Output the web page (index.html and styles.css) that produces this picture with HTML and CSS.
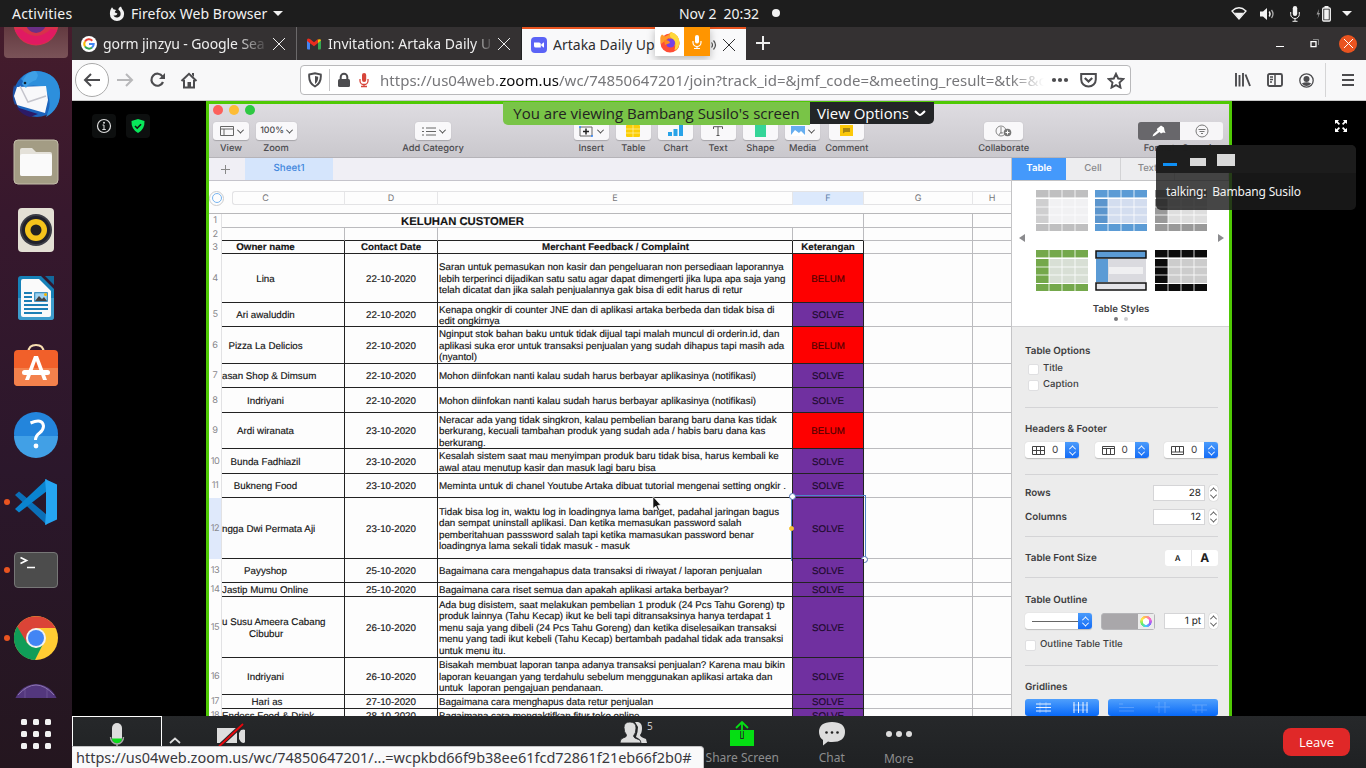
FILE: index.html
```html
<!DOCTYPE html>
<html lang="en">
<head>
<meta charset="utf-8">
<title>Artaka Daily Update</title>
<link rel="stylesheet" href="styles.css">
</head>
<body>
<header class="topbar">
  <span class="activities">Activities</span>
  <svg class="fx-mono" width="16" height="16" viewBox="0 0 16 16"><path d="M3 1.200C1.500 3 .9 5 .9 8a7.100 7.100 0 0 0 14.200 0c0-2-.6-3.500-2-5L12 .6c-1 .4-2.600 1.500-2.600 3.200 1.200.7 2.200 1.900 2.200 3.900A3.700 3.700 0 0 1 4.400 9C6 10 8 9.500 8.400 7.600L6 6.500C5.400 6 6.500 4.500 7.400 4.300 6.400 3.400 5.500 3.300 4.700 3.500z" fill="#f2f2f2"/></svg>
  <span class="appname">Firefox Web Browser</span>
  <span class="tri"></span>
  <span class="clock">Nov 2&nbsp; 20:32</span>
  <span class="notif"></span>
  <div class="tray">
    <svg width="16" height="14" viewBox="0 0 16 14"><path d="M1 4Q8-2.500 15 4L8 12z" fill="none" stroke="#f2f2f2" stroke-width="1.300"/><path d="M3.500 5.800h9L8 12z" fill="#f2f2f2"/></svg>
    <svg width="16" height="14" viewBox="0 0 16 14"><path d="M0 4.500h3L7 1v12L3 9.500H0z" fill="#f2f2f2"/><path d="M9.300 4.500q1.500 2.500 0 5" fill="none" stroke="#f2f2f2" stroke-width="1.500"/><path d="M11.500 3q3 4 0 8" fill="none" stroke="#aaa" stroke-width="1.300"/></svg>
    <svg width="10" height="16" viewBox="0 0 10 16"><rect x="2.800" y="0" width="4.400" height="10" rx="2.200" fill="#f2f2f2"/><path d="M.7 6v2.500a4.300 4 0 0 0 8.600 0V6M5 12.500V15M2.500 15.300h5" fill="none" stroke="#f2f2f2"/></svg>
    <svg width="15" height="16" viewBox="0 0 15 16"><path d="M3 3L.5 8.500h2L1.500 13 4 7H2.500z" fill="#999"/><rect x="6.700" y="2" width="7.600" height="13" rx="1" fill="none" stroke="#f2f2f2" stroke-width="1.300"/><rect x="8.200" y="3.500" width="4.600" height="10" fill="#f2f2f2"/><rect x="8.500" y="0" width="4" height="2" fill="#f2f2f2"/></svg>
    <span class="tri"></span>
  </div>
</header>
<div class="desk">
  <nav class="dock">
    <div class="slot first"><svg width="48" height="20" viewBox="0 28 48 20"><circle cx="24" cy="24" r="22.500" fill="#d8314a"/><path d="M3 31a22.500 22.500 0 0 0 42 0l-6-1q-15 14-30 0z" fill="#e01a62"/><circle cx="24" cy="24" r="10" fill="#6b2f86"/></svg></div>
    <div class="slot"><svg width="50" height="50" viewBox="0 0 50 50"><circle cx="26" cy="25" r="23" fill="#1b64bd"/><path d="M10 10Q18-1 32 3q16 4 17 21 0 16-14 24 6-12 2-22-5-12-20-9z" fill="#2d8fdc"/><path d="M3 16Q0 28 4 36l6-6z" fill="#1d50a5"/><path d="M5 38q6 8 14 10l8-3z" fill="#2c1b66"/><path d="M6 18L35 17 37 31 34 44 6 36 3 27z" fill="#f8f8fa"/><path d="M9 17l8 16 18-6" fill="none" stroke="#c4c4cc" stroke-width="1.500"/><path d="M11 15q3-12 13-13 5 3 1 9-7 2-10 8z" fill="#3fa0e6"/><circle cx="14" cy="14" r="1.300" fill="#123"/></svg></div>
    <div class="slot"><svg width="48" height="48" viewBox="0 0 48 48"><rect x="2" y="2" width="44" height="44" rx="4" fill="#a39c84" stroke="#c3bda9"/><path d="M8 12q0-2 2-2h10l4 4h14q2 0 2 2v20q0 2-2 2H10q-2 0-2-2z" fill="#e4e1d9"/><rect x="8" y="16" width="32" height="22" rx="2" fill="#fafafa"/></svg></div>
    <div class="slot"><svg width="48" height="48" viewBox="0 0 48 48"><rect x="6" y="2" width="36" height="44" rx="4" fill="#e3dfd4"/><circle cx="24" cy="24" r="16" fill="#3c3d45"/><circle cx="24" cy="24" r="14" fill="#20212a"/><circle cx="24" cy="24" r="11" fill="#f4c31b"/><circle cx="24" cy="24" r="5.500" fill="#222"/></svg></div>
    <div class="slot"><svg width="48" height="48" viewBox="0 0 48 48"><path d="M6 5q0-3 3-3h20l13 13v28q0 3-3 3H9q-3 0-3-3z" fill="#1681b8"/><path d="M33 2h9v9z" fill="#13689b"/><path d="M6 24h36v19q0 3-3 3H9q-3 0-3-3z" fill="#3d9ccc"/><path d="M9 7q0-2 2-2h16l12 12v24q0 2-2 2H11q-2 0-2-2z" fill="#fafafa"/><path d="M12 19h8M12 23h8M12 27h8M12 31h24M12 35h24M12 39h18" stroke="#1c7fb6" stroke-width="2"/><rect x="22.700" y="18.700" width="12.600" height="8.600" fill="#9ed2f1" stroke="#1c7fb6"/><path d="M23 27l4-5 3 3 2-2 3 4z" fill="#444"/><circle cx="33.500" cy="20.500" r="1.500" fill="#f4b400"/></svg></div>
    <div class="slot"><svg width="48" height="48" viewBox="0 0 48 48"><path d="M16.500 10q0-7 7.500-7t7.500 7" fill="none" stroke="#f7deb0" stroke-width="2"/><rect x="2" y="8" width="44" height="36" rx="4" fill="#f1602a"/><path d="M2 26h44v14q0 4-4 4H6q-4 0-4-4z" fill="#f3814c"/><path d="M13 38l9-24h4l9 24h-4L24 19 17 38z" fill="#fff"/><rect x="10" y="28" width="28" height="5" rx="2.500" fill="#fff"/></svg></div>
    <div class="slot"><svg width="48" height="48" viewBox="0 0 48 48"><circle cx="24" cy="24" r="22" fill="#2385dc"/><path d="M2 26a22 22 0 0 0 44 0z" fill="#41a0e6"/><path d="M18.500 13q12-5 13 3 0 4-4 7-4 3-4 7" fill="none" stroke="#fff" stroke-width="3"/><circle cx="24" cy="36" r="2.400" fill="#fff"/></svg></div>
    <div class="slot run"><svg width="48" height="48" viewBox="0 0 48 48"><path d="M3 17l4-3.500L35 37v10z" fill="#0b6fb8"/><path d="M3 31l4 3.500L35 13V1z" fill="#0a84d0"/><path d="M33 1l12 5.500v35L33 47l1-12V13z" fill="#25a5f2"/></svg></div>
    <div class="slot run"><svg width="48" height="48" viewBox="0 0 48 48"><rect x="2.500" y="6.500" width="43" height="35" rx="3.500" fill="#4c4c4c" stroke="#777"/><path d="M8.500 11.500l6 3-6 3M15 21.500h8" fill="none" stroke="#fff" stroke-width="1.700"/></svg></div>
    <div class="slot run"><svg width="48" height="48" viewBox="0 0 48 48"><circle cx="24" cy="24" r="22" fill="#fc3"/><path d="M5 13a22 22 0 0 1 38.500 1H24L14 29z" fill="#db4437"/><path d="M5.200 12.500A22 22 0 0 0 23 46l8-16-7 4-9-5z" fill="#0f9d58"/><circle cx="24" cy="24" r="10" fill="#f1f1f1"/><circle cx="24" cy="24" r="8" fill="#4285f4"/></svg></div>
    <div class="slot last"><svg width="48" height="48" viewBox="0 0 48 48"><circle cx="24" cy="24" r="22" fill="#53377d"/><path d="M13 6v20M35 6v20" stroke="#7b62a0" opacity=".6"/><path d="M6 13q18-20 36 0" fill="none" stroke="#8c76ae"/></svg></div>
    <div class="apps"><i></i><i></i><i></i><i></i><i></i><i></i><i></i><i></i><i></i></div>
  </nav>
  <main class="browser">
    <div class="tabs">
      <div class="tab"><svg width="16" height="16" viewBox="0 0 16 16"><circle cx="8" cy="8" r="8" fill="#fff"/><g fill="none" stroke-width="2"><path d="M11.300 4.700A4.700 4.700 0 0 0 4 5.500" stroke="#ea4335"/><path d="M4 5.500a4.700 4.700 0 0 0 0 5" stroke="#fbbc05"/><path d="M4 10.500a4.700 4.700 0 0 0 7 1" stroke="#34a853"/><path d="M11 11.500q1.700-1.500 1.700-3.500H8" stroke="#4285f4"/></g></svg><span class="ttl t1">gorm jinzyu - Google Sea</span><b class="x"></b></div>
      <div class="tab"><svg width="16" height="16" viewBox="0 0 16 16"><path d="M1 4l3 2.500v7H2q-1 0-1-1z" fill="#4285f4"/><path d="M12 6.500L15 4v8.500q0 1-1 1h-2z" fill="#34a853"/><path d="M12 3.500q3-1 3 1L12 7z" fill="#fbbc04"/><path d="M1 4q0-2.500 3-1l4 3.300L12 3v4l-4 3.300L1 5z" fill="#ea2d1f"/></svg><span class="ttl t2">Invitation: Artaka Daily U</span><b class="x"></b></div>
      <div class="tab active"><svg width="16" height="16" viewBox="0 0 16 16"><rect width="16" height="16" rx="4" fill="#5b63f6"/><path d="M3 5.500h5q1.800 0 1.800 1.500v3.500h-5Q3 10.500 3 9z" fill="#fff"/><path d="M10.300 7.200L13 5.300v5.400l-2.700-1.900z" fill="#fff"/></svg><span class="ttl t3">Artaka Daily Up</span><svg class="snd" width="9" height="12" viewBox="0 0 9 12"><path d="M1 1v10M3.500 3.500q2 2.500 0 5M5.500 1.500q4 4.500 0 9" fill="none" stroke="#555" stroke-width="1.200"/></svg><b class="x"></b>
        <div class="share-ind"><span><svg width="22" height="22" viewBox="0 0 22 22"><circle cx="11" cy="12" r="9.500" fill="#ff4d35"/><path d="M2 13Q0 6 3 3.500l3 2Q9 5 12 1q8 3 8.500 11 0 5-4 8 0-9-7-13z" fill="#ff9a2a"/><path d="M12 1q9 3 8.500 11-1 6-5 7 3-9-3-12-3-2-.5-6z" fill="#ffd83c"/><circle cx="11.500" cy="12" r="4.500" fill="#7542e5"/><path d="M5 9q6 0 6 3l-5 2z" fill="#ff8a20"/></svg></span><em><svg width="12" height="16" viewBox="0 0 12 16"><rect x="4" y="1" width="4" height="8.500" rx="2" fill="#fff"/><path d="M2 7v1.500a4 4 0 0 0 8 0V7M6 12.500V14M3 14.500h6" fill="none" stroke="#fff" stroke-width="1.200"/></svg></em></div>
      </div>
      <b class="plus"></b>
      <div class="winbtns"><i class="min"></i><svg width="9" height="9" viewBox="0 0 9 9"><path d="M1 2.700h5v5H1z" fill="none" stroke="#fff" stroke-width="1.300"/><path d="M3 .5h5.500V6" fill="none" stroke="#888"/></svg><span class="close"><b class="x"></b></span></div>
    </div>
    <div class="nav">
      <span class="back"><svg width="18" height="16" viewBox="0 0 18 16"><path d="M17 8H2M8 2L2 8l6 6" fill="none" stroke="#4c4c4f" stroke-width="2"/></svg></span>
      <svg class="i-fwd" width="18" height="16" viewBox="0 0 18 16"><path d="M1 8h15M10 2l6 6-6 6" fill="none" stroke="#b8b8ba" stroke-width="2"/></svg>
      <svg class="i-rel" width="17" height="16" viewBox="0 0 17 16"><path d="M13.500 4.500A6 6 0 1 0 14 10" fill="none" stroke="#4c4c4f" stroke-width="2.200"/><path d="M16 1v6h-6z" fill="#4c4c4f"/></svg>
      <svg class="i-home" width="18" height="17" viewBox="0 0 18 17"><path d="M1.500 9L9 1.800 16.500 9M4 8v7.500h10V8" fill="none" stroke="#4c4c4f" stroke-width="2"/><path d="M12 1h2v4l-2-2zM7.500 10h3.500v5H7.500z" fill="#4c4c4f"/></svg>
      <div class="url">
        <svg width="14" height="16" viewBox="0 0 14 16"><path d="M1.200 2.500L7 1.200l5.800 1.300Q13.500 11 7 14.500.5 11 1.200 2.500z" fill="none" stroke="#4c4c4f" stroke-width="1.900"/><path d="M7 4l3.200.8Q10.300 10 7 12z" fill="#4c4c4f"/></svg>
        <i class="vsep"></i>
        <svg width="14" height="16" viewBox="0 0 14 16"><rect x="1" y="7" width="12" height="8" rx="1.500" fill="#4c4c4f"/><path d="M3.700 7V5a3.300 3.300 0 0 1 6.600 0v2" fill="none" stroke="#4c4c4f" stroke-width="2"/></svg>
        <svg class="umic" width="10" height="16" viewBox="0 0 10 16"><rect x="3" y="1" width="4.200" height="9" rx="2.100" fill="#d7453a"/><path d="M1 7v2a4 3.500 0 0 0 8 0V7M5 12.500V14M2 14.500h6" fill="none" stroke="#d7453a" stroke-width="1.300"/></svg>
        <span class="utext">https://us04web.<b>zoom.us</b>/wc/74850647201/join?track_id=&amp;jmf_code=&amp;meeting_result=&amp;tk=&amp;c</span>
        <svg class="u1" width="18" height="6" viewBox="0 0 18 6"><circle cx="3" cy="3" r="2.100" fill="#4c4c4f"/><circle cx="9" cy="3" r="2.100" fill="#4c4c4f"/><circle cx="15" cy="3" r="2.100" fill="#4c4c4f"/></svg>
        <svg class="u2" width="17" height="16" viewBox="0 0 17 16"><path d="M1.200 2h14.600v5.500a7.300 7 0 0 1-14.600 0z" fill="none" stroke="#4c4c4f" stroke-width="2"/><path d="M4.800 6l3.700 3.500L12.200 6" fill="none" stroke="#4c4c4f" stroke-width="2.200"/></svg>
        <svg class="u3" width="18" height="17" viewBox="0 0 18 17"><path d="M9 1.800l2.200 4.700 5 .6-3.700 3.500 1 5L9 13.200l-4.500 2.400 1-5L1.800 7.100l5-.6z" fill="none" stroke="#4c4c4f" stroke-width="1.900"/></svg>
      </div>
      <svg class="i-lib" width="16" height="14" viewBox="0 0 16 14"><path d="M1 0v13.500M4.500 2v11.500M8 0v13.500M10.500 1.500L15 13" fill="none" stroke="#4c4c4f" stroke-width="1.900"/></svg>
      <svg class="i-side" width="16" height="14" viewBox="0 0 16 14"><rect x="1" y="1" width="14" height="12" rx="1.500" fill="none" stroke="#4c4c4f" stroke-width="1.900"/><path d="M8 1v12M3 4h3M3 6.500h3M3 9h2" stroke="#4c4c4f" stroke-width="1.500"/></svg>
      <svg class="i-acc" width="15" height="15" viewBox="0 0 15 15"><circle cx="7.500" cy="7.500" r="6.700" fill="none" stroke="#4c4c4f" stroke-width="1.300"/><circle cx="7.500" cy="6" r="3" fill="#4c4c4f"/><path d="M2.800 10.500q4.700-2.500 9.400 0-4.700 5-9.400 0z" fill="#4c4c4f"/></svg>
      <i class="nsep"></i>
      <span class="burger"></span>
    </div>
    <section class="zoom">
      <div class="ztiles">
        <span><svg width="16" height="16" viewBox="0 0 16 16"><circle cx="8" cy="8" r="6.500" fill="none" stroke="#ddd" stroke-width="1.200"/><path d="M6.500 7H8v4.500M6.300 11.500h3.500" fill="none" stroke="#ddd"/><circle cx="8" cy="4.800" r="1" fill="#ddd"/></svg></span>
        <span><svg width="14" height="14" viewBox="0 0 14 14"><path d="M7 0l6.500 2Q14 10 7 14 0 10 .5 2z" fill="#08e65a"/><path d="M4 7l2.200 2.200L10 5.200" fill="none" stroke="#111" stroke-width="1.600"/></svg></span>
      </div>
      <div class="share">
        <div class="mac">
          <div class="lights"><i class="red-l"></i><i class="yel-l"></i><i class="grn-l"></i></div>
          <div class="mtools">
            <div class="mt c1"><span class="btn w36"><svg width="14" height="10" viewBox="0 0 14 10"><path d="M.5.500h13v9H.5zM.5 3h13M4 3v6.500" fill="none" stroke="#666"/></svg><u></u></span>View</div>
            <div class="mt c2"><span class="btn w41">100%<u></u></span>Zoom</div>
            <div class="mt c4"><span class="btn w36"><svg width="14" height="9" viewBox="0 0 14 9"><path d="M0 1h2M4 1h10M0 4.500h2M4 4.500h10M0 8h2M4 8h10" stroke="#666"/></svg><u></u></span>Add Category</div>
            <div class="mt c6"><span class="btn"><svg width="15" height="11" viewBox="0 0 15 11"><path d="M1 1h12v9H1z" fill="none" stroke="#666"/><path d="M4 5.500h6M7 2.500v6" stroke="#222" stroke-width="1.500"/><circle cx="1" cy="1" r="1" fill="#38f"/><circle cx="13" cy="10" r="1" fill="#38f"/></svg><u></u></span>Insert</div>
            <div class="mt"><span class="btn"><svg width="14" height="12" viewBox="0 0 14 12"><rect width="14" height="12" rx="1" fill="#fbce07"/><path d="M0 4h14M0 8h14M7 0v12" stroke="#fff2b0" stroke-width=".7"/></svg></span>Table</div>
            <div class="mt"><span class="btn"><svg width="15" height="12" viewBox="0 0 15 12"><rect y="7" width="4" height="4" fill="#29a3e8"/><rect x="5.500" y="4" width="4" height="7" fill="#29a3e8"/><rect x="11" width="4" height="11" fill="#29a3e8"/></svg></span>Chart</div>
            <div class="mt"><span class="btn"><svg width="10" height="10" viewBox="0 0 10 10"><path d="M.5 3V.7h9V3M5 .7V9.500M3.500 9.500h3" fill="none" stroke="#555"/></svg></span>Text</div>
            <div class="mt"><span class="btn"><svg width="11" height="12" viewBox="0 0 11 12"><rect width="11" height="12" fill="#35d598"/></svg></span>Shape</div>
            <div class="mt"><span class="btn"><svg width="14" height="10" viewBox="0 0 14 10"><rect width="14" height="10" fill="#66aef0"/><path d="M0 9l4-5 4 3 2-2 4 4v1H0z" fill="#fff"/></svg><u></u></span>Media</div>
            <div class="mt"><span class="btn"><svg width="13" height="12" viewBox="0 0 13 12"><path d="M0 0h13v11H0z" fill="#fbc80a"/><path d="M3 3h7v4H5L3 8.500z" fill="#a88612"/></svg></span>Comment</div>
            <div class="mt c14"><span class="btn w39"><svg width="17" height="12" viewBox="0 0 17 12"><circle cx="6" cy="6" r="5" fill="none" stroke="#888"/><path d="M6 2v7M4 10q1-4 4-2" stroke="#888" fill="none"/><circle cx="12.500" cy="7.500" r="3.800" fill="#777"/><path d="M10.500 7.500h4M12.500 5.500v4" stroke="#fff"/></svg></span>Collaborate</div>
            <div class="mt c16"><div class="seg"><span><svg width="14" height="12" viewBox="0 0 14 12"><path d="M.5 11.500L1.500 9l4-3.500L4.800 4 9 .5l3 2 .5 3 1 2.500-2.500-.5-2 1-1.500-1.500L3 10.500z" fill="#fff"/></svg></span><span><svg width="14" height="14" viewBox="0 0 14 14"><circle cx="7" cy="7" r="6" fill="none" stroke="#777"/><path d="M3.500 5.500h7M4.500 7.500h5M6 9.500h2" stroke="#777"/></svg></span></div><div class="fmt"><span>Format</span><span>Organize</span></div></div>
          </div>
        </div>
        <div class="work">
          <div class="left">
            <div class="sheetbar"><b class="plus s"></b><span>Sheet1</span></div>
            <div class="colhead"><i class="orb"></i><div class="cols"><span>C</span><span>D</span><span>E</span><span class="on">F</span><span>G</span><span>H</span></div></div>
            <div class="grid">
              <div class="row h1"><i>1</i><p class="merge">KELUHAN CUSTOMER</p><s></s><s></s></div>
              <div class="row h2"><i>2</i><p></p><p></p><p></p><p></p><s></s><s></s></div>
              <div class="row h3"><i>3</i><p>Owner name</p><p>Contact Date</p><p>Merchant Feedback / Complaint</p><p>Keterangan</p><s></s><s></s></div>
              <div class="row a49"><i>4</i><p>Lina</p><p>22-10-2020</p><p>Saran untuk pemasukan non kasir dan pengeluaran non persediaan laporannya<br>lebih terperinci dijadikan satu satu agar dapat dimengerti jika lupa apa saja yang<br>telah dicatat dan jika salah penjualannya gak bisa di edit harus di retur</p><p class="red">BELUM</p><s></s><s></s></div>
              <div class="row a24"><i>5</i><p>Ari awaluddin</p><p>22-10-2020</p><p>Kenapa ongkir di counter JNE dan di aplikasi artaka berbeda dan tidak bisa di<br>edit ongkirnya</p><p class="pur">SOLVE</p><s></s><s></s></div>
              <div class="row a37"><i>6</i><p>Pizza La Delicios</p><p>22-10-2020</p><p>Nginput stok bahan baku untuk tidak dijual tapi malah muncul di orderin.id, dan<br>aplikasi suka eror untuk transaksi penjualan yang sudah dihapus tapi masih ada<br>(nyantol)</p><p class="red">BELUM</p><s></s><s></s></div>
              <div class="row a24"><i>7</i><p class="cut">asan Shop &amp; Dimsum</p><p>22-10-2020</p><p>Mohon diinfokan nanti kalau sudah harus berbayar aplikasinya (notifikasi)</p><p class="pur">SOLVE</p><s></s><s></s></div>
              <div class="row a25"><i>8</i><p>Indriyani</p><p>22-10-2020</p><p>Mohon diinfokan nanti kalau sudah harus berbayar aplikasinya (notifikasi)</p><p class="pur">SOLVE</p><s></s><s></s></div>
              <div class="row a36"><i>9</i><p>Ardi wiranata</p><p>23-10-2020</p><p>Neracar ada yang tidak singkron, kalau pembelian barang baru dana kas tidak<br>berkurang, kecuali tambahan produk yang sudah ada / habis baru dana kas<br>berkurang.</p><p class="red">BELUM</p><s></s><s></s></div>
              <div class="row a25"><i>10</i><p>Bunda Fadhiazil</p><p>23-10-2020</p><p>Kesalah sistem saat mau menyimpan produk baru tidak bisa, harus kembali ke<br>awal atau menutup kasir dan masuk lagi baru bisa</p><p class="pur">SOLVE</p><s></s><s></s></div>
              <div class="row a24"><i>11</i><p>Bukneng Food</p><p>23-10-2020</p><p>Meminta untuk di chanel Youtube Artaka dibuat tutorial mengenai setting ongkir .</p><p class="pur">SOLVE</p><s></s><s></s></div>
              <div class="row a61 sel"><i>12</i><p class="cut">ngga Dwi Permata Aji</p><p>23-10-2020</p><p>Tidak bisa log in, waktu log in loadingnya lama banget, padahal jaringan bagus<br>dan sempat uninstall aplikasi. Dan ketika memasukan password salah<br>pemberitahuan passsword salah tapi ketika mamasukan password benar<br>loadingnya lama sekali tidak masuk - masuk</p><p class="pur">SOLVE</p><s></s><s></s><em class="selbox"><b></b></em></div>
              <div class="row a24"><i>13</i><p>Payyshop</p><p>25-10-2020</p><p>Bagaimana cara mengahapus data transaksi di riwayat / laporan penjualan</p><p class="pur">SOLVE</p><s></s><s></s></div>
              <div class="row a14"><i>14</i><p class="cut">Jastip Mumu Online</p><p>25-10-2020</p><p>Bagaimana cara riset semua dan apakah aplikasi artaka berbayar?</p><p class="pur">SOLVE</p><s></s><s></s></div>
              <div class="row a61"><i>15</i><p class="cut two"><span>u Susu Ameera Cabang</span><span class="mid">Cibubur</span></p><p>26-10-2020</p><p>Ada bug disistem, saat melakukan pembelian 1 produk (24 Pcs Tahu Goreng) tp<br>produk lainnya (Tahu Kecap) ikut ke beli tapi ditransaksinya hanya terdapat 1<br>menu saja yang dibeli (24 Pcs Tahu Goreng) dan ketika diselesaikan transaksi<br>menu yang tadi ikut kebeli (Tahu Kecap) bertambah padahal tidak ada transaksi<br>untuk menu itu.</p><p class="pur">SOLVE</p><s></s><s></s></div>
              <div class="row a37"><i>16</i><p>Indriyani</p><p>26-10-2020</p><p>Bisakah membuat laporan tanpa adanya transaksi penjualan? Karena mau bikin<br>laporan keuangan yang terdahulu sebelum menggunakan aplikasi artaka dan<br>untuk&nbsp; laporan pengajuan pendanaan.</p><p class="pur">SOLVE</p><s></s><s></s></div>
              <div class="row a14"><i>17</i><p class="hari">Hari as</p><p>27-10-2020</p><p>Bagaimana cara menghapus data retur penjualan</p><p class="pur">SOLVE</p><s></s><s></s></div>
              <div class="row a14"><i>18</i><p class="cut">Endess Food &amp; Drink</p><p>28-10-2020</p><p>Bagaimana cara mengaktifkan fitur toko online</p><p class="pur">SOLVE</p><s></s><s></s></div>
            </div>
          </div>
          <aside class="panel">
            <div class="ptabs"><span class="on">Table</span><span>Cell</span><span>Text</span><span>Arrange</span></div>
            <div class="styles">
              <div class="thumbs">
                <i class="ar"></i>
                <svg class="k1" viewBox="0 0 52 41"><use href="#th"/></svg>
                <svg class="k2" viewBox="0 0 52 41"><use href="#th"/></svg>
                <svg class="k3" viewBox="0 0 52 41"><use href="#th"/></svg>
                <i class="ar rt"></i>
                <svg class="k4" viewBox="0 0 52 41"><use href="#th"/></svg>
                <svg viewBox="0 0 52 41"><path d="M1 1h50v7H1z" fill="#5b9bd5" stroke="#111" stroke-width="1.500"/><path d="M1 9h12v23H1z" fill="#5b9bd5"/><path d="M13 9h38v23H13z" fill="#dadadf"/><path d="M14 17h34v7H14z" fill="#efeff1"/><path d="M1 33h50v7H1z" fill="#e4e4e8" stroke="#111" stroke-width="1.500"/></svg>
                <svg class="k6" viewBox="0 0 52 41"><use href="#th"/></svg>
              </div>
              <b>Table Styles</b>
              <div class="dots"><i></i><i></i></div>
            </div>
            <div class="opts">
              <h4>Table Options</h4>
              <label class="ck in"><i></i>Title</label>
              <label class="ck in"><i></i>Caption</label>
              <hr class="m14">
              <h4 class="m13">Headers &amp; Footer</h4>
              <div class="line m5"><span class="pop"><svg width="13" height="9" viewBox="0 0 13 9"><path d="M.5.500h12v8H.5z" fill="none" stroke="#444"/><path d="M0 4.500h13M4.500 0v9M8.500 0v9" stroke="#444"/></svg>0<i class="st"></i></span><span class="pop"><svg width="13" height="9" viewBox="0 0 13 9"><path d="M.5.500h12v8H.5z" fill="none" stroke="#444"/><path d="M0 2.500h13M4.500 3v6M8.500 3v6" stroke="#444"/></svg>0<i class="st"></i></span><span class="pop"><svg width="13" height="9" viewBox="0 0 13 9"><path d="M.5.500h12v8H.5z" fill="none" stroke="#444"/><path d="M0 6h13M4.500 0v6M8.500 0v6" stroke="#444"/></svg>0<i class="st"></i></span></div>
              <hr class="m16">
              <div class="line tall m9"><h4>Rows</h4><span class="num">28</span><i class="sp"></i></div>
              <div class="line tall m6"><h4>Columns</h4><span class="num">12</span><i class="sp"></i></div>
              <hr class="m10">
              <div class="line m13"><h4>Table Font Size</h4><span class="aa"><small>A</small><b>A</b></span></div>
              <hr class="m11">
              <h4 class="m14">Table Outline</h4>
              <div class="line m5"><span class="pop wide"><em></em><i class="st"></i></span><span class="clr"><i></i></span><span class="num sm">1 pt</span><i class="sp"></i></div>
              <label class="ck m8"><i></i>Outline Table Title</label>
              <hr class="m12">
              <h4 class="m13">Gridlines</h4>
              <div class="line m4"><span class="blue b1"><svg width="15" height="11" viewBox="0 0 15 11"><path d="M0 2h15M0 5.500h15M0 9h15" stroke="#fff" opacity=".9"/><path d="M4 0v11M10 0v11" stroke="#fff" opacity=".3"/></svg><svg width="15" height="11" viewBox="0 0 15 11"><path d="M1 0v11M5.500 0v11M10 0v11M14 0v11" stroke="#fff" opacity=".9"/><path d="M0 3h15M0 8h15" stroke="#fff" opacity=".4"/></svg></span><span class="blue b2"><svg width="15" height="11" viewBox="0 0 15 11"><path d="M0 5.500h15M0 2h4M0 9h15" stroke="#fff" opacity=".2"/></svg><svg width="15" height="11" viewBox="0 0 15 11"><path d="M0 5h15M4 0v11M10 0v11" stroke="#fff" opacity=".2"/></svg><svg width="15" height="11" viewBox="0 0 15 11"><path d="M0 3h15M4 3v8M10 3v8M0 8h15" stroke="#fff" opacity=".2"/></svg></span></div>
            </div>
          </aside>
        </div>
      </div>
      <div class="banner"><span class="view">You are viewing Bambang Susilo's screen</span><span class="vopt">View Options<svg width="12" height="7" viewBox="0 0 12 7"><path d="M1 1q4 4 5 4t5-4" fill="none" stroke="#fff" stroke-width="2"/></svg></span></div>
      <svg class="expand" width="12" height="12" viewBox="0 0 12 12"><path d="M0 0h4L2.800 1.500 5 3.800 3.800 5 1.500 2.800 0 4zM12 0v4l-1.500-1.200L8.200 5 7 3.800l2.200-2.300L8 0zM0 12V8l1.500 1.200L3.800 7 5 8.200l-2.200 2.300L4 12zM12 12H8l1.200-1.500L7 8.200 8.200 7l2.300 2.200L12 8z" fill="#fff"/></svg>
      <div class="talk"><div><i></i><i></i><i></i></div><p>talking:&nbsp; Bambang Susilo</p></div>
      <svg class="cursor" width="9" height="15" viewBox="0 0 9 15"><path d="M1 .5v12l3-2.500 2 4.500 1.500-.8L5.600 9.500l3-.5z" fill="#111" stroke="#fff" stroke-width=".6"/></svg>
      <footer class="zbar">
        <span class="mute"><svg width="16" height="28" viewBox="0 0 16 28"><rect x="3" y="0" width="10" height="19.500" rx="5" fill="#ddd"/><path d="M3 15.500h10a5 5 0 0 1-10 0z" fill="#0bdc1b"/><path d="M1.500 14a6.500 7 0 0 0 13 0M8 21v4" fill="none" stroke="#aaa" stroke-width="1.400"/></svg></span>
        <svg class="car" width="12" height="7" viewBox="0 0 12 7"><path d="M1 6l5-4.500L11 6" fill="none" stroke="#ddd" stroke-width="1.700"/></svg>
        <svg class="cam" width="30" height="24" viewBox="0 0 30 24"><path d="M1 5h20v15H1zM23 10l2-3q3-1 4 0v12q-1 2-4 0l-2-3z" fill="#ddd"/><path d="M3 23.500L27 1" stroke="#232527" stroke-width="4"/><path d="M3 23.500L27 1" stroke="#e8070c" stroke-width="1.900"/></svg>
        <div class="zb people"><svg width="27" height="22" viewBox="0 0 27 22"><path d="M15 0q7-1 7 6 0 5-2 7 0 2 6 4l1 4h-6q0-4-5-6 2-5 2-10z" fill="#ddd"/><path d="M10 0q6 0 6 6 0 5-2.500 8 0 2 5 3.500Q21 18 21 21H0q0-4 3-5 4-1 3.500-3Q4 10 4 5.500 4 0 10 0z" fill="#ddd" stroke="#232527" stroke-width=".8"/></svg><sup>5</sup></div>
        <div class="zb shr"><svg width="24" height="26" viewBox="0 0 24 26"><path d="M0 9h24v16H0z" fill="#05de13"/><path d="M12 18V10" stroke="#232527" stroke-width="3.500"/><path d="M12 17V2M6 7l6-6 6 6" fill="none" stroke="#05de13" stroke-width="1.800"/></svg>Share Screen</div>
        <div class="zb cht"><svg width="26" height="24" viewBox="0 0 26 24"><path d="M13 0q13 0 13 10t-13 10q-2 0-4-.5L4 23.500V18Q0 15 0 10 0 0 13 0z" fill="#ddd"/><circle cx="7.500" cy="10.500" r="1.300" fill="#222"/><circle cx="13" cy="10.500" r="1.300" fill="#222"/><circle cx="18.500" cy="10.500" r="1.300" fill="#222"/></svg>Chat</div>
        <div class="zb mor"><svg width="26" height="26" viewBox="0 0 26 26"><circle cx="3" cy="13" r="3" fill="#ddd"/><circle cx="13" cy="13" r="3" fill="#ddd"/><circle cx="23" cy="13" r="3" fill="#ddd"/></svg>More</div>
        <button class="leave">Leave</button>
      </footer>
      <div class="status">https://us04web.zoom.us/wc/74850647201/...=wcpkbd66f9b38ee61fcd72861f21eb66f2b0#</div>
    </section>
  </main>
</div>
<svg class="defs" width="0" height="0"><defs><g id="th"><path class="ft" d="M0 0h52v7.500H0zM0 34h52v7H0z"/><path class="sd" d="M0 9h13v24H0z"/><path class="bd" d="M13 9h39v24H13z"/><path class="ln" d="M13 0v41M26 0v41M39 0v41M0 8.300h52M0 17h52M0 25h52M0 33.500h52" fill="none"/></g></defs></svg>
</body>
</html>
```
FILE: styles.css
```css
* { box-sizing: border-box; margin: 0; padding: 0; }
body { width: 1366px; height: 768px; overflow: hidden; background: #000; font-family: "Noto Sans", "Open Sans", sans-serif; font-size: 14px; }
svg { display: block; flex: none; }
i, em { font-style: normal; }
.defs { position: absolute; }

/* system bar */
.topbar { position: relative; height: 27px; background: #1d1d1d; color: #f2f2f2; display: flex; align-items: center; padding-left: 12px; }
.activities { width: 97px; letter-spacing: .2px; }
.fx-mono { margin-right: 6px; }
.appname { letter-spacing: .05px; }
.tri { border: 5px solid transparent; border-top: 5px solid #f2f2f2; border-bottom: 0; margin-left: 6px; }
.clock { position: absolute; left: 679px; letter-spacing: -.05px; }
.notif { position: absolute; left: 772px; top: 9px; width: 8px; height: 8px; border-radius: 50%; background: #f2f2f2; }
.tray { margin-left: auto; padding-right: 14px; display: flex; align-items: center; }
.tray svg + svg { margin-left: 13px; }
.tray svg:nth-child(3) { margin-left: 14px; }
.tray svg:nth-child(4) { margin-left: 16px; }
.tray .tri { margin-left: 11px; }

.desk { display: flex; height: 741px; }
.dock { width: 72px; background: linear-gradient(#451c2c, #37182d 25%, #2b172b 60%, #24161f); flex: none; }
.slot { height: 68px; display: flex; align-items: center; justify-content: center; position: relative; }
.slot.first { height: 31px; margin: 0 4px 2px; background: linear-gradient(#633a40, #7a5358); border-radius: 0 0 4px 4px; align-items: flex-start; }
.slot.last { height: 26px; overflow: hidden; align-items: flex-start; padding-top: 10px; }
.run::before { content: ""; position: absolute; left: 4px; top: 31px; width: 6px; height: 6px; border-radius: 50%; background: #e95420; }
.apps { display: grid; grid-template-columns: repeat(3, 6px); gap: 6px; padding: 21px 0 0 21px; }
.apps i { width: 6px; height: 6px; border-radius: 1.500px; background: #f2f2f2; }

/* browser chrome */
.browser { width: 1294px; }
.tabs { height: 33px; display: flex; background: #343132; }
.tab { width: 225px; display: flex; align-items: center; padding-left: 9px; color: #eee; position: relative; border-right: 1px solid #6b696a; }
.tab:nth-child(2) { border-right-color: #222; }
.tab.active { background: #f9f9fa; color: #2e2e30; border: 0; border-top: 2px solid #e95420; width: 224px; }
.ttl { margin-left: 6px; width: 166px; overflow: hidden; white-space: nowrap; -webkit-mask-image: linear-gradient(90deg, #000 80%, transparent); }
.t2 { -webkit-mask-image: linear-gradient(90deg, #000 88%, transparent); }
.t1 { letter-spacing: -.1px; }
.t3 { width: 155px; -webkit-mask-image: none; }
.snd { margin-right: 2px; }
.x { position: relative; width: 12px; height: 12px; margin-left: 4px; flex: none; background: linear-gradient(45deg, transparent 46%, currentColor 46%, currentColor 54%, transparent 54%), linear-gradient(-45deg, transparent 46%, currentColor 46%, currentColor 54%, transparent 54%); }
.share-ind { position: absolute; left: 133px; top: -2px; height: 29px; display: flex; box-shadow: 0 3px 8px #0004; }
.share-ind > * { display: flex; align-items: center; justify-content: center; }
.share-ind span { width: 29px; background: #fff; }
.share-ind em { width: 26px; background: #ff9500; }
.plus { width: 14px; height: 14px; margin: 9px 0 0 10px; color: #eee; background: linear-gradient(currentColor, currentColor) 50% 50% / 14px 2px no-repeat, linear-gradient(currentColor, currentColor) 50% 50% / 2px 14px no-repeat; }
.winbtns { margin-left: auto; padding-right: 9px; display: flex; align-items: center; color: #fff; }
.min { width: 8px; height: 1px; background: #fff; margin: 5px 26px 0 0; }
.close { width: 18px; height: 18px; border-radius: 50%; background: #e95420; margin-left: 20px; display: flex; align-items: center; justify-content: center; }
.close .x { width: 9px; height: 9px; margin: 0; }
.nav { height: 41px; background: #f8f8f9; border-bottom: 1px solid #c8c8c8; display: flex; align-items: center; position: relative; }
.back { width: 34px; height: 34px; border: 1px solid #aaa; border-radius: 50%; background: #fff; margin-left: 3px; display: flex; align-items: center; justify-content: center; }
.i-fwd { margin-left: 7px; }
.i-rel { margin-left: 15px; }
.i-home { margin-left: 14px; }
.url { margin-left: 102px; width: 831px; height: 30px; border: 1px solid #b9b9bb; border-radius: 4px; background: #fff; display: flex; align-items: center; padding-left: 7px; }
.vsep { width: 1px; height: 22px; background: #c5c5c7; margin: 0 7px; }
.umic { margin-left: 8px; }
.utext { width: 664px; margin-left: 11px; font-size: 15px; letter-spacing: .02px; color: #77777a; white-space: nowrap; overflow: hidden; -webkit-mask-image: linear-gradient(90deg, #000 95%, transparent); }
.utext b { font-weight: 400; color: #0c0c0d; }
.u1 { margin-left: 7px; }
.u2 { margin-left: 11px; }
.u3 { margin-left: 10px; }
.i-lib { margin-left: 104px; }
.i-side { margin-left: 16px; }
.i-acc { margin-left: 16px; }
.nsep { width: 1px; height: 34px; background: #d5d5d6; margin-left: 11px; }
.burger { width: 12px; height: 12px; margin-left: 16px; border-top: 2px solid #4c4c4f; border-bottom: 2px solid #4c4c4f; background: linear-gradient(#4c4c4f, #4c4c4f) 0 50% / 12px 2px no-repeat; }

/* meeting */
.zoom { position: relative; height: 667px; background: #000; }
.ztiles { position: absolute; left: 20px; top: 13px; display: flex; gap: 10px; }
.ztiles span { width: 24px; height: 24px; border-radius: 4px; background: #0d0f0f; display: flex; align-items: center; justify-content: center; }
.share { margin-left: 134px; width: 1026px; height: 615px; border: 3px solid #4fc904; border-bottom: 0; overflow: hidden; background: #fdfdfd; font-family: Inter, sans-serif; text-rendering: geometricPrecision; }
.mac { height: 54px; background: linear-gradient(#dedce1, #cac8cd); border-bottom: 1px solid #b5b3b8; }
.lights { display: flex; gap: 6px; padding: 1px 0 0 4px; height: 18px; }
.lights i { width: 10px; height: 10px; border-radius: 50%; }
.red-l { background: #fc605b; } .yel-l { background: #fdbc35; } .grn-l { background: #2ec842; }
.mtools { display: grid; grid-template-columns: 44px 46px 100px 68px 103px repeat(6, 42.300px) 46px 105px 58px 105px 85px; font-size: 9.300px; color: #4b4a4e; }
.mt { display: flex; flex-direction: column; align-items: center; white-space: nowrap; line-height: 18px; font-weight: 500; }
.c4 { grid-column: 4; } .c6 { grid-column: 6; } .c14 { grid-column: 14; } .c16 { grid-column: 16; }
.btn { width: 35px; height: 18px; background: #f9f8fa; border-radius: 3px; display: flex; align-items: center; justify-content: center; gap: 4px; box-shadow: 0 .5px 1px #0003; font-size: 8.800px; }
.w36 { width: 36px; } .w41 { width: 41px; gap: 3px; } .w39 { width: 39px; }
u { width: 5px; height: 5px; border: solid #444; border-width: 0 1.200px 1.200px 0; transform: rotate(45deg) translate(-1px, -1px); }
.seg { display: flex; width: 85px; height: 18px; border-radius: 3px; overflow: hidden; }
.seg span { flex: 1; background: #f7f6f8; display: flex; align-items: center; justify-content: center; }
.seg span:first-child { background: #68676b; }
.fmt { display: grid; grid-template-columns: 43px 42px; width: 85px; justify-items: center; }
.work { display: flex; }
.left { width: 802px; }
.sheetbar { height: 23px; background: #f0eff5; border-bottom: 1px solid #c5c4cb; display: flex; }
.plus.s { width: 9px; height: 9px; margin: 7px 0 0 12px; color: #888; background-size: 9px 1px, 1px 9px; }
.sheetbar span { margin-left: 15px; width: 88px; background: #d5e5fc; color: #4287dd; text-align: center; font-size: 9.800px; font-weight: 500; line-height: 22px; }
.colhead { height: 32px; display: flex; align-items: center; padding-top: 2px; }
.orb { width: 15px; height: 15px; border: 1px solid #ccc; border-radius: 50%; flex: none; display: flex; align-items: center; justify-content: center; }
.orb::after { content: ""; width: 8px; height: 8px; border: 1px solid #78b5f0; border-radius: 50%; }
.cols { margin-left: 8px; width: 779px; height: 14px; border: 1px solid #e3e3e5; border-right: 0; border-radius: 3px 0 0 3px; display: grid; grid-template-columns: 111px 93px 355px 71px 109px 39px; font-size: 9px; line-height: 13px; text-align: center; color: #77777b; }
.cols span + span { border-left: 1px solid #e6e6e8; }
.cols span:first-child { padding-right: 46px; }
.cols .on { background: #dce9fc; color: #5c7da8; }
.grid { border-top: 1px solid #b8b8ba; font-family: "Liberation Sans", Arial, sans-serif; font-size: 9.760px; line-height: 11.400px; color: #141414; -webkit-text-stroke: .15px currentColor; }
.row { display: grid; grid-template-columns: 13px 123px 93px 355px 71px 109px 38px; position: relative; }
.row > i { color: #88888c; font: 9.200px/12px Inter, sans-serif; letter-spacing: -.4px; display: flex; align-items: center; justify-content: center; border-right: 1px solid #e2e2e4; -webkit-text-stroke: 0; }
.row > p { border-right: 1px solid #222; border-bottom: 1px solid #222; display: flex; align-items: center; justify-content: center; white-space: nowrap; overflow: hidden; padding-top: 3px; }
.row > p:nth-of-type(1) { padding-right: 35px; }
.row > p:nth-of-type(3) { justify-content: flex-start; padding-left: 1px; }
.row > s { border-right: 1px solid #bbbbbe; border-bottom: 1px solid #bbbbbe; text-decoration: none; }
.row > s:last-of-type { border-right: 0; }
.row > p.cut { justify-content: flex-start; padding-right: 0; }
.row > p.hari { padding-right: 32px; }
.row > p.two { flex-direction: column; justify-content: center; align-items: flex-start; }
.mid { margin-left: 27px; }
.row > p.merge { grid-column: 2 / 6; font-weight: 700; font-size: 11.300px; padding: 4px 160px 0 0; border-color: #bbbbbe; }
.h1 { height: 14px; } .h2 { height: 13px; } .h3 { height: 13px; font-weight: 700; }
.row.h2 > p { border-right-color: #bbbbbe; }
.row.h3 > p { padding-top: 2px; }
.row.h3 > p:nth-of-type(3) { justify-content: center; }
.a14 { height: 14px; } .a24 { height: 24px; } .a25 { height: 25px; } .a36 { height: 36px; } .a37 { height: 37px; } .a49 { height: 49px; } .a61 { height: 61px; }
.row > .red { background: #fe0000; color: #4c0000; }
.row > .pur { background: #7030a0; color: #1d0a2c; }
.sel > i { background: #dfe9fb; }
.selbox { position: absolute; left: 582px; top: -3px; width: 75px; height: 66px; border: 1px solid #4f86c6; }
.selbox::before, .selbox::after, .selbox b { content: ""; position: absolute; width: 5px; height: 5px; border: 1px solid #5173b5; border-radius: 50%; background: #fff; }
.selbox::before { left: -3px; top: -3px; }
.selbox::after { right: -3px; bottom: -3px; }
.selbox b { left: -3px; top: 30px; background: #f5c236; border-color: #f5c236; }

.panel { width: 218px; background: #ececec; border-left: 1px solid #c4c4c6; font-size: 9.600px; color: #3d3d40; }
.ptabs { height: 23px; display: grid; grid-template-columns: 54px 55px 54px 54px; border-bottom: 1px solid #c4c4c6; line-height: 22px; text-align: center; font-weight: 500; color: #88888b; background: #ededef; }
.ptabs span + span { border-right: 1px solid #d3d3d5; }
.ptabs .on { background: #4499fb; color: #fff; font-weight: 600; }
.styles { height: 146px; background: #fff; border-bottom: 1px solid #d2d2d4; padding: 9px 5px 0 6px; text-align: center; }
.thumbs { display: grid; grid-template-columns: 6px 52px 52px 52px 6px; column-gap: 7.500px; row-gap: 19px; justify-content: center; }
.thumbs svg { width: 52px; height: 41px; }
.thumbs svg:nth-of-type(4) { grid-column: 2; }
.ar { grid-row: 1 / 3; align-self: center; margin: -6px 0 0 -3px; width: 6px; height: 8px; border: 4px solid transparent; border-right: 6px solid #8b8b8e; border-left: 0; }
.rt { grid-column: 5; margin-left: 4px; border-right: 0; border-left: 6px solid #8b8b8e; }
.ln { stroke: #fff; stroke-width: 1; opacity: .8; }
.k1 { --f: #bfbfc0; --s: #cfcfd0; --b: #f1f1f3; }
.k1 .ln { stroke: #aaa; }
.k2 { --f: #5b9bd5; --s: #5b95cd; --b: #d3ddef; }
.k2 .ln, .k3 .ln, .k4 .ln, .k6 .ln { opacity: .55; }
.k3 { --f: #999; --s: #999; --b: #dedede; }
.k4 { --f: #74a84b; --s: #74a84b; --b: #d8dfd5; }
.k6 { --f: #0c0c0c; --s: #0c0c0c; --b: #ccc; }
.ft { fill: var(--f); } .sd { fill: var(--s); } .bd { fill: var(--b); }
.styles b { display: block; margin-top: 12px; line-height: 13px; font-weight: 600; font-size: 9.600px; }
.dots { display: flex; gap: 6px; justify-content: center; margin-top: 1px; }
.dots i { width: 4px; height: 4px; border-radius: 50%; background: #77777a; }
.dots i + i { background: #cfcfd1; }
.opts { padding: 16px 11px 0 13px; }
.opts h4 { height: 16px; font-size: 9.800px; font-weight: 600; line-height: 18px; }
.ck { display: flex; align-items: center; height: 16px; font-weight: 500; gap: 4px; line-height: 14px; }
.ck.in { padding-left: 3px; }
h4 + .ck { margin-top: 2px; }
.ck i { width: 11px; height: 11px; background: #fff; border: 1px solid #dfdfe1; border-radius: 2px; }
.opts hr { border: 0; height: 1px; background: #d4d4d6; }
.m4 { margin-top: 4px; } .m5 { margin-top: 5px; } .m6 { margin-top: 6px; } .m8 { margin-top: 8px; } .m9 { margin-top: 9px; } .m10 { margin-top: 10px; } .m11 { margin-top: 11px; } .m12 { margin-top: 12px; } .m13 { margin-top: 13px; } .m14 { margin-top: 14px; } .m16 { margin-top: 16px; }
.line { display: flex; justify-content: space-between; align-items: center; height: 16px; }
.line.tall { height: 18px; }
.line.tall h4 { margin-right: auto; }
.pop { width: 54px; height: 16px; background: #fff; border-radius: 3px; display: flex; align-items: center; padding-left: 7px; gap: 7px; font-size: 10px; overflow: hidden; box-shadow: 0 .5px 1px #0003; }
.st { margin-left: auto; width: 14px; height: 16px; background: linear-gradient(#4a9bfb, #146cf6); display: flex; flex-direction: column; align-items: center; justify-content: center; gap: 1px; }
.st::before, .st::after, .sp::before, .sp::after { content: ""; width: 4px; height: 4px; border: solid #fff; border-width: 1.200px 0 0 1.200px; transform: rotate(45deg) translate(1px, 1px); }
.st::after, .sp::after { transform: rotate(225deg) translate(1px, 1px); }
.sp { width: 9px; height: 16px; margin-left: 4px; border-radius: 4px; background: #fff; display: flex; flex-direction: column; align-items: center; justify-content: center; gap: 2px; box-shadow: 0 0 1px #0005; }
.sp::before, .sp::after { border-color: #555; }
.num { width: 52px; height: 16px; background: #fff; border: 1px solid #d5d5d7; text-align: right; padding-right: 3px; line-height: 15px; font-size: 10px; color: #222; }
.num.sm { width: 42px; margin-left: 9px; }
.aa { width: 53px; height: 16px; background: #fff; border-radius: 3px; display: grid; grid-template-columns: 1fr 1fr; text-align: center; line-height: 16px; color: #222; }
.aa small { font-size: 8px; font-weight: 600; border-right: 1px solid #e4e4e6; }
.aa b { font-size: 12px; }
.pop.wide { width: 68px; gap: 0; }
.wide em { width: 46px; height: 1px; background: #666; }
.clr { width: 54px; height: 17px; margin-left: 9px; background: #a9a7aa; border: 1px solid #b5b5b8; border-radius: 3px; display: flex; justify-content: flex-end; }
.clr i { width: 16px; background: radial-gradient(circle at 50% 50%, #fff 3px, transparent 3.500px, transparent 5.500px, #ececec 6px), conic-gradient(#fa6, #f6c, #86f, #4cf, #6e6, #fe4, #fa6); }
.blue { height: 17px; border-radius: 3px; background: linear-gradient(#4f9ffc, #0869f8); display: flex; align-items: center; justify-content: space-around; }
.b1 { width: 74px; } .b2 { width: 110px; }

.banner { position: absolute; left: 431px; top: 1px; display: flex; font: 15px/23px "Open Sans", sans-serif; white-space: nowrap; }
.view { width: 307px; height: 23px; text-align: center; background: #79c447; color: #222; border-radius: 0 0 0 5px; }
.vopt { width: 124px; height: 22px; line-height: 22px; background: #232527; color: #fff; display: flex; align-items: center; padding-left: 7px; gap: 5px; border-radius: 0 0 5px 0; }
.expand { position: absolute; left: 1263px; top: 19px; }
.talk { position: absolute; left: 1084px; top: 44px; width: 200px; height: 65px; border-radius: 5px; overflow: hidden; background: #1c1c1cd0; color: #f2f2f2; font-size: 12px; letter-spacing: -.17px; }
.talk > div { height: 28px; background: #1d1d1df5; display: flex; padding: 9px 0 0 7px; gap: 13px; }
.talk i { background: #d9d9d9; height: 12px; width: 18px; }
.talk i:first-child { width: 14px; height: 3px; margin-top: 9px; background: #0e8ff5; }
.talk i:nth-child(2) { width: 16px; height: 8px; margin-top: 4px; }
.talk i:nth-child(3) { margin-left: -2px; }
.talk p { padding: 10px 0 0 10px; line-height: 17px; white-space: nowrap; }
.cursor { position: absolute; left: 580px; top: 395px; }
.zbar { position: relative; height: 52px; background: linear-gradient(#26282a, #1f2123); display: flex; color: #8c8d8e; font-size: 12px; }
.mute { width: 90px; height: 52px; border: 1px solid #fff; display: flex; justify-content: center; padding-top: 6px; }
.car { margin: 21px 0 0 7px; }
.cam { margin: 7px 0 0 35px; }
.zb { display: flex; flex-direction: column; align-items: center; white-space: nowrap; line-height: 17px; }
.people { flex-direction: row; align-items: flex-start; margin-left: 374px; padding-top: 6px; }
.people sup { font-size: 10px; line-height: 8px; color: #ccc; vertical-align: baseline; }
.zb.shr, .zb.cht, .zb.mor { padding-top: 5px; gap: 2px; }
.shr { margin-left: 53px; width: 73px; }
.cht { margin-left: 32px; width: 42px; }
.zb.cht { padding-top: 6px; gap: 3px; }
.zb.mor { gap: 3px; }
.mor { margin-left: 26px; width: 40px; }
.leave { margin: 12px 16px 0 auto; width: 67px; height: 28px; border: 0; border-radius: 8px; background: #e02828; color: #fff; font: 13px "Open Sans", sans-serif; }
.status { position: absolute; left: 0; bottom: 0; width: 632px; height: 22px; background: #f9f9fa; border: 1px solid #c3c3c5; border-left: 0; border-bottom: 0; border-radius: 0 4px 0 0; color: #38383d; padding-left: 4px; line-height: 21px; font-size: 14.480px; white-space: nowrap; }
```
